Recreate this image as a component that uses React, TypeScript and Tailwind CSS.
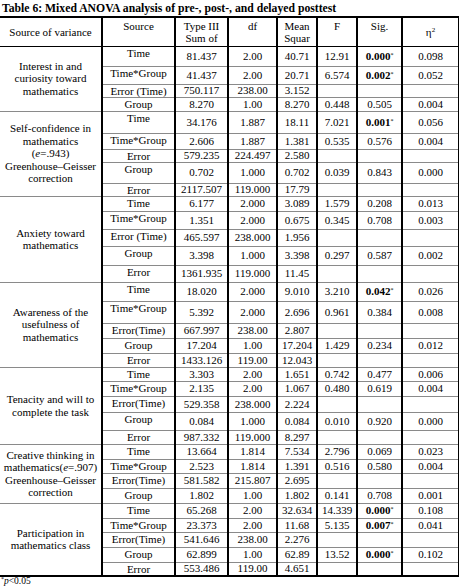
import React from "react"

type Row = [string, string, string, string, string, string, string, number, boolean?]

const groups: { label: React.ReactNode; rows: Row[] }[] = [
  {
    label: (
      <>
        Interest in and
        <br />
        curiosity toward
        <br />
        mathematics
      </>
    ),
    rows: [
      ["Time", "81.437", "2.00", "40.71", "12.91", "0.000", "0.098", 20, true],
      ["Time*Group", "41.437", "2.00", "20.71", "6.574", "0.002", "0.052", 18, true],
      ["Error (Time)", "750.117", "238.00", "3.152", "", "", "", 13],
      ["Group", "8.270", "1.00", "8.270", "0.448", "0.505", "0.004", 14],
    ],
  },
  {
    label: (
      <>
        Self-confidence in
        <br />
        mathematics
        <br />(<i>e</i>=.943)
        <br />
        Greenhouse–Geisser
        <br />
        correction
      </>
    ),
    rows: [
      ["Time", "34.176", "1.887", "18.11", "7.021", "0.001", "0.056", 22, true],
      ["Time*Group", "2.606", "1.887", "1.381", "0.535", "0.576", "0.004", 16],
      ["Error", "579.235", "224.497", "2.580", "", "", "", 13],
      ["Group", "0.702", "1.000", "0.702", "0.039", "0.843", "0.000", 21],
      ["Error", "2117.507", "119.000", "17.79", "", "", "", 13],
    ],
  },
  {
    label: (
      <>
        Anxiety toward
        <br />
        mathematics
      </>
    ),
    rows: [
      ["Time", "6.177", "2.000", "3.089", "1.579", "0.208", "0.013", 15],
      ["Time*Group", "1.351", "2.000", "0.675", "0.345", "0.708", "0.003", 18],
      ["Error (Time)", "465.597", "238.000", "1.956", "", "", "", 17],
      ["Group", "3.398", "1.000", "3.398", "0.297", "0.587", "0.002", 19],
      ["Error", "1361.935", "119.000", "11.45", "", "", "", 17],
    ],
  },
  {
    label: (
      <>
        Awareness of the
        <br />
        usefulness of
        <br />
        mathematics
      </>
    ),
    rows: [
      ["Time", "18.020", "2.000", "9.010", "3.210", "0.042", "0.026", 19, true],
      ["Time*Group", "5.392", "2.000", "2.696", "0.961", "0.384", "0.008", 22],
      ["Error(Time)", "667.997", "238.00", "2.807", "", "", "", 15],
      ["Group", "17.204", "1.00", "17.204", "1.429", "0.234", "0.012", 15],
      ["Error", "1433.126", "119.00", "12.043", "", "", "", 14],
    ],
  },
  {
    label: (
      <>
        Tenacity and will to
        <br />
        complete the task
      </>
    ),
    rows: [
      ["Time", "3.303", "2.00", "1.651", "0.742", "0.477", "0.006", 14],
      ["Time*Group", "2.135", "2.00", "1.067", "0.480", "0.619", "0.004", 15],
      ["Error(Time)", "529.358", "238.000", "2.224", "", "", "", 16],
      ["Group", "0.084", "1.000", "0.084", "0.010", "0.920", "0.000", 18],
      ["Error", "987.332", "119.000", "8.297", "", "", "", 14],
    ],
  },
  {
    label: (
      <>
        Creative thinking in
        <br />
        mathematics(<i>e</i>=.907)
        <br />
        Greenhouse–Geisser
        <br />
        correction
      </>
    ),
    rows: [
      ["Time", "13.664", "1.814", "7.534", "2.796", "0.069", "0.023", 15],
      ["Time*Group", "2.523", "1.814", "1.391", "0.516", "0.580", "0.004", 14],
      ["Error(Time)", "581.582", "215.807", "2.695", "", "", "", 15],
      ["Group", "1.802", "1.00", "1.802", "0.141", "0.708", "0.001", 15],
    ],
  },
  {
    label: (
      <>
        Participation in
        <br />
        mathematics class
      </>
    ),
    rows: [
      ["Time", "65.268", "2.00", "32.634", "14.339", "0.000", "0.108", 15, true],
      ["Time*Group", "23.373", "2.00", "11.68", "5.135", "0.007", "0.041", 14, true],
      ["Error(Time)", "541.646", "238.00", "2.276", "", "", "", 15],
      ["Group", "62.899", "1.00", "62.89", "13.52", "0.000", "0.102", 15, true],
      ["Error", "553.486", "119.00", "4.651", "", "", "", 14],
    ],
  },
]

const cell =
  "border-x-2 border-x-black border-y border-y-[#8a8a8a] p-0 text-center align-middle leading-[11px]"
const head = "border-x-2 border-x-black border-y border-y-black border-t-2 p-0 text-center leading-[12px]"

export default function App() {
  return (
    <div
      className="w-[459px] h-[586px] overflow-hidden bg-white text-black text-[11px]"
      style={{ fontFamily: '"Liberation Serif", "Times New Roman", serif' }}
    >
      <div className="h-[16px] pl-[2px] pt-[2px] text-[11.7px] font-bold leading-[13px] whitespace-nowrap">
        Table 6: Mixed ANOVA analysis of pre-, post-, and delayed posttest
      </div>
      <table className="w-[459px] table-fixed border-collapse border-b-2 border-b-black">
        <colgroup>
          <col className="w-[102px]" />
          <col className="w-[73px]" />
          <col className="w-[53px]" />
          <col className="w-[49px]" />
          <col className="w-[40px]" />
          <col className="w-[40px]" />
          <col className="w-[45px]" />
          <col className="w-[57px]" />
        </colgroup>
        <thead>
          <tr className="h-[29px]">
            <td className="border-y border-y-black border-t-2 border-r-2 border-r-black p-0 text-center align-middle leading-[12px]">
              Source of variance
            </td>
            <td className={head + " align-top pt-[2px]"}>Source</td>
            <td className={head + " align-top pt-[2px]"}>
              Type III
              <br />
              Sum of
            </td>
            <td className={head + " align-top pt-[2px]"}>df</td>
            <td className={head + " align-top pt-[2px]"}>
              Mean
              <br />
              Squar
            </td>
            <td className={head + " align-top pt-[2px]"}>F</td>
            <td className={head + " align-top pt-[2px]"}>Sig.</td>
            <td className={head + " align-middle"}>
              η<sup className="text-[7px]">2</sup>
            </td>
          </tr>
        </thead>
        <tbody>
          {groups.map((g, gi) =>
            g.rows.map((r, ri) => (
              <tr key={gi + "-" + ri} style={{ height: r[7] }}>
                {ri === 0 && (
                  <td
                    rowSpan={g.rows.length}
                    className="border-y border-y-[#8a8a8a] border-r-2 border-r-black p-0 text-center align-middle leading-[12.5px]"
                  >
                    {g.label}
                  </td>
                )}
                <td className={cell + " !align-top pt-[1px]"}>{r[0]}</td>
                <td className={cell}>{r[1]}</td>
                <td className={cell}>{r[2]}</td>
                <td className={cell}>{r[3]}</td>
                <td className={cell}>{r[4]}</td>
                <td className={cell}>
                  {r[8] ? (
                    <span className="font-bold">
                      {r[5]}
                      <sup className="text-[6px] font-normal">*</sup>
                    </span>
                  ) : (
                    r[5]
                  )}
                </td>
                <td className={cell}>{r[6]}</td>
              </tr>
            ))
          )}
        </tbody>
      </table>
      <div className="pl-[1px] text-[9.5px] leading-[9px]">
        <sup className="text-[6px]">*</sup>
        <i>p</i>&lt;0.05
      </div>
    </div>
  )
}
